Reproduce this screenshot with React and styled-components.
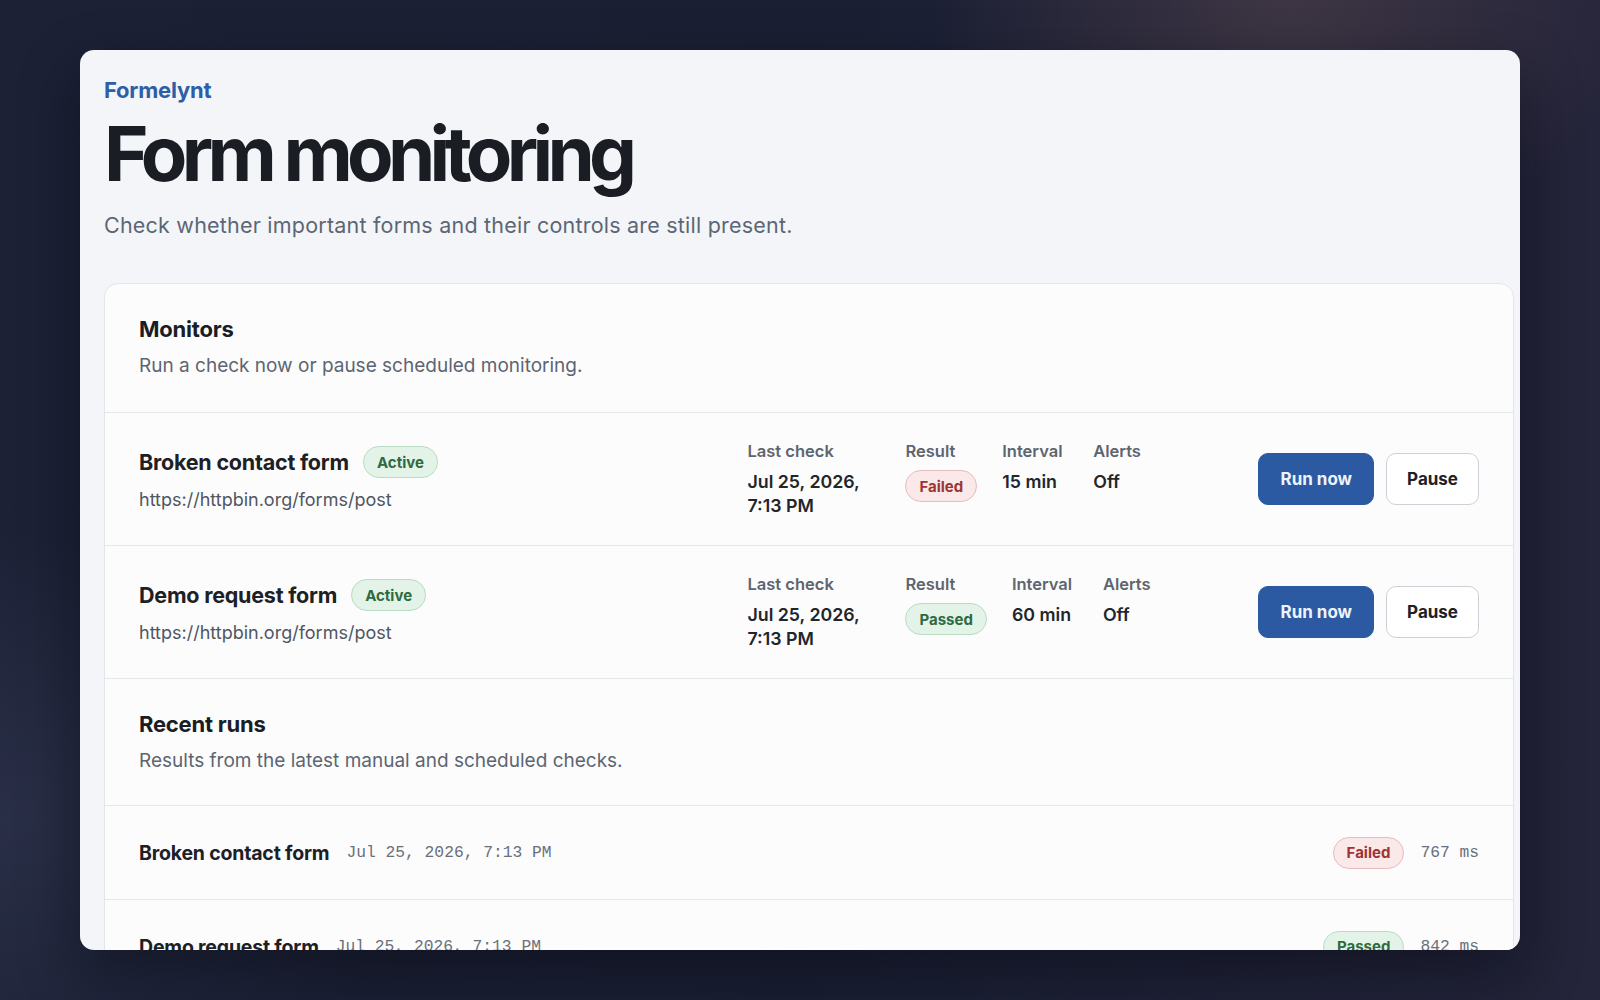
import styled, { createGlobalStyle } from "styled-components";

const GlobalStyle = createGlobalStyle`
  html, body {
    margin: 0;
    padding: 0;
    height: 100%;
  }
  body {
    font-family: Inter, "Noto Sans", "Liberation Sans", sans-serif;
    background: #1b2034;
    overflow: hidden;
  }
  * {
    box-sizing: border-box;
  }
`;

const Stage = styled.div`
  width: 1600px;
  height: 1000px;
  padding: 50px 80px;
  background:
    radial-gradient(ellipse 520px 360px at 1290px 0px, rgba(72, 60, 72, 0.75), transparent 70%),
    radial-gradient(ellipse 600px 420px at 0px 820px, rgba(52, 58, 84, 0.55), transparent 70%),
    linear-gradient(90deg, #1c2136 0%, #1a1f33 50%, #24243a 100%);
`;

const Window = styled.div`
  height: 900px;
  border-radius: 14px;
  overflow: hidden;
  background: #f3f5f8;
  box-shadow: 0 24px 60px rgba(4, 6, 16, 0.45);
  padding: 26px 6px 0 24px;
`;

const Eyebrow = styled.div`
  font-size: 22px;
  line-height: 28px;
  font-weight: 700;
  color: #2f5ea8;
  letter-spacing: -0.01em;
`;

const Title = styled.h1`
  margin: 9px 0 0;
  font-size: 76px;
  line-height: 80px;
  font-weight: 700;
  color: #1a1d23;
  letter-spacing: -0.075em;
`;

const Lead = styled.p`
  margin: 18px 0 0;
  font-size: 21.5px;
  line-height: 28px;
  color: #5d6675;
  letter-spacing: 0.01em;
`;

const Card = styled.section`
  margin-top: 44px;
  background: #fcfcfd;
  border: 1px solid #e2e5e9;
  border-radius: 14px;
`;

const SectionHead = styled.div`
  padding: 31px 34px ${p => (p.first ? 33 : 31)}px;
  border-bottom: 1px solid #e3e6ea;
`;

const SectionTitle = styled.h2`
  margin: 0;
  font-size: 22px;
  line-height: 28px;
  font-weight: 700;
  color: #1a1d23;
  letter-spacing: -0.01em;
`;

const SectionText = styled.p`
  margin: 10px 0 0;
  font-size: 19px;
  line-height: 26px;
  color: #5d6571;
`;

const MonitorRow = styled.div`
  display: grid;
  grid-template-columns: minmax(0, 1.2fr) minmax(0, 1fr) auto;
  align-items: center;
  column-gap: 24px;
  padding: 27px 34px;
  border-bottom: 1px solid #e3e6ea;
`;

const NameBlock = styled.div`
  display: flex;
  flex-direction: column;
  gap: 10px;
`;

const NameLine = styled.div`
  display: flex;
  align-items: center;
  gap: 14px;
`;

const Name = styled.span`
  font-size: ${p => (p.small ? 19.5 : 21.5)}px;
  line-height: 28px;
  font-weight: 700;
  color: #1d2025;
  letter-spacing: -0.01em;
`;

const Url = styled.span`
  font-size: 18px;
  line-height: 24px;
  color: #4f5661;
`;

const tones = {
  green: { bg: "#e4f3e8", border: "#b8dcc3", fg: "#2e6b3f" },
  red: { bg: "#fbe9e9", border: "#e8bcbc", fg: "#9e3434" },
};

const Badge = styled.span`
  display: inline-flex;
  align-items: center;
  height: 32px;
  padding: 0 13px;
  border-radius: 999px;
  border: 1px solid ${p => tones[p.tone].border};
  background: ${p => tones[p.tone].bg};
  color: ${p => tones[p.tone].fg};
  font-size: 15px;
  font-weight: 700;
  white-space: nowrap;
`;

const Meta = styled.div`
  display: flex;
  align-items: flex-start;
  gap: 25px;
`;

const MetaItem = styled.div`
  display: flex;
  flex-direction: column;
  align-items: flex-start;
  gap: 8px;
  width: ${p => (p.wide ? "133px" : "auto")};
  min-width: ${p => (p.min ? p.min : 0)}px;
`;

const MetaLabel = styled.span`
  font-size: 16.5px;
  line-height: 22px;
  font-weight: 600;
  color: #5e656f;
`;

const MetaValue = styled.span`
  font-size: 17.8px;
  line-height: 24px;
  font-weight: 600;
  color: #22262b;
`;

const Actions = styled.div`
  display: flex;
  gap: 12px;
`;

const Button = styled.button`
  height: 52px;
  padding: 0 ${p => (p.primary ? 21 : 20)}px;
  border-radius: 10px;
  border: 1px solid ${p => (p.primary ? "#2b5aa3" : "#cdd1d7")};
  background: ${p => (p.primary ? "#2b5aa3" : "#ffffff")};
  color: ${p => (p.primary ? "#eef3fb" : "#1d2126")};
  font-family: inherit;
  font-size: 17px;
  font-weight: 700;
  cursor: pointer;
`;

const RunRow = styled.div`
  display: flex;
  align-items: center;
  justify-content: space-between;
  height: 94px;
  padding: 0 34px;
  border-bottom: 1px solid #e3e6ea;
`;

const RunLeft = styled.div`
  display: flex;
  align-items: center;
  gap: 17px;
`;

const RunRight = styled.div`
  display: flex;
  align-items: center;
  gap: 16px;
`;

const Mono = styled.span`
  font-family: "Liberation Mono", "DejaVu Sans Mono", monospace;
  font-size: 16.3px;
  color: #6b7079;
`;

const monitors = [
  {
    name: "Broken contact form",
    url: "https://httpbin.org/forms/post",
    last: ["Jul 25, 2026,", "7:13 PM"],
    result: "Failed",
    interval: "15 min",
    alerts: "Off",
  },
  {
    name: "Demo request form",
    url: "https://httpbin.org/forms/post",
    last: ["Jul 25, 2026,", "7:13 PM"],
    result: "Passed",
    interval: "60 min",
    alerts: "Off",
  },
];

const runs = [
  { name: "Broken contact form", at: "Jul 25, 2026, 7:13 PM", result: "Failed", ms: "767 ms" },
  { name: "Demo request form", at: "Jul 25, 2026, 7:13 PM", result: "Passed", ms: "842 ms" },
];

const toneFor = result => (result === "Failed" ? "red" : "green");

function App() {
  return (
    <>
      <GlobalStyle />
      <Stage>
        <Window>
          <Eyebrow>Formelynt</Eyebrow>
          <Title>Form monitoring</Title>
          <Lead>Check whether important forms and their controls are still present.</Lead>

          <Card>
            <SectionHead first>
              <SectionTitle>Monitors</SectionTitle>
              <SectionText>Run a check now or pause scheduled monitoring.</SectionText>
            </SectionHead>

            {monitors.map(m => (
              <MonitorRow key={m.name}>
                <NameBlock>
                  <NameLine>
                    <Name>{m.name}</Name>
                    <Badge tone="green">Active</Badge>
                  </NameLine>
                  <Url>{m.url}</Url>
                </NameBlock>

                <Meta>
                  <MetaItem wide>
                    <MetaLabel>Last check</MetaLabel>
                    <MetaValue>
                      {m.last[0]}
                      <br />
                      {m.last[1]}
                    </MetaValue>
                  </MetaItem>
                  <MetaItem>
                    <MetaLabel>Result</MetaLabel>
                    <Badge tone={toneFor(m.result)}>{m.result}</Badge>
                  </MetaItem>
                  <MetaItem min={66}>
                    <MetaLabel>Interval</MetaLabel>
                    <MetaValue>{m.interval}</MetaValue>
                  </MetaItem>
                  <MetaItem>
                    <MetaLabel>Alerts</MetaLabel>
                    <MetaValue>{m.alerts}</MetaValue>
                  </MetaItem>
                </Meta>

                <Actions>
                  <Button primary>Run now</Button>
                  <Button>Pause</Button>
                </Actions>
              </MonitorRow>
            ))}

            <SectionHead>
              <SectionTitle>Recent runs</SectionTitle>
              <SectionText>Results from the latest manual and scheduled checks.</SectionText>
            </SectionHead>

            {runs.map(r => (
              <RunRow key={r.name}>
                <RunLeft>
                  <Name small>{r.name}</Name>
                  <Mono>{r.at}</Mono>
                </RunLeft>
                <RunRight>
                  <Badge tone={toneFor(r.result)}>{r.result}</Badge>
                  <Mono>{r.ms}</Mono>
                </RunRight>
              </RunRow>
            ))}
          </Card>
        </Window>
      </Stage>
    </>
  );
}

export default App;
